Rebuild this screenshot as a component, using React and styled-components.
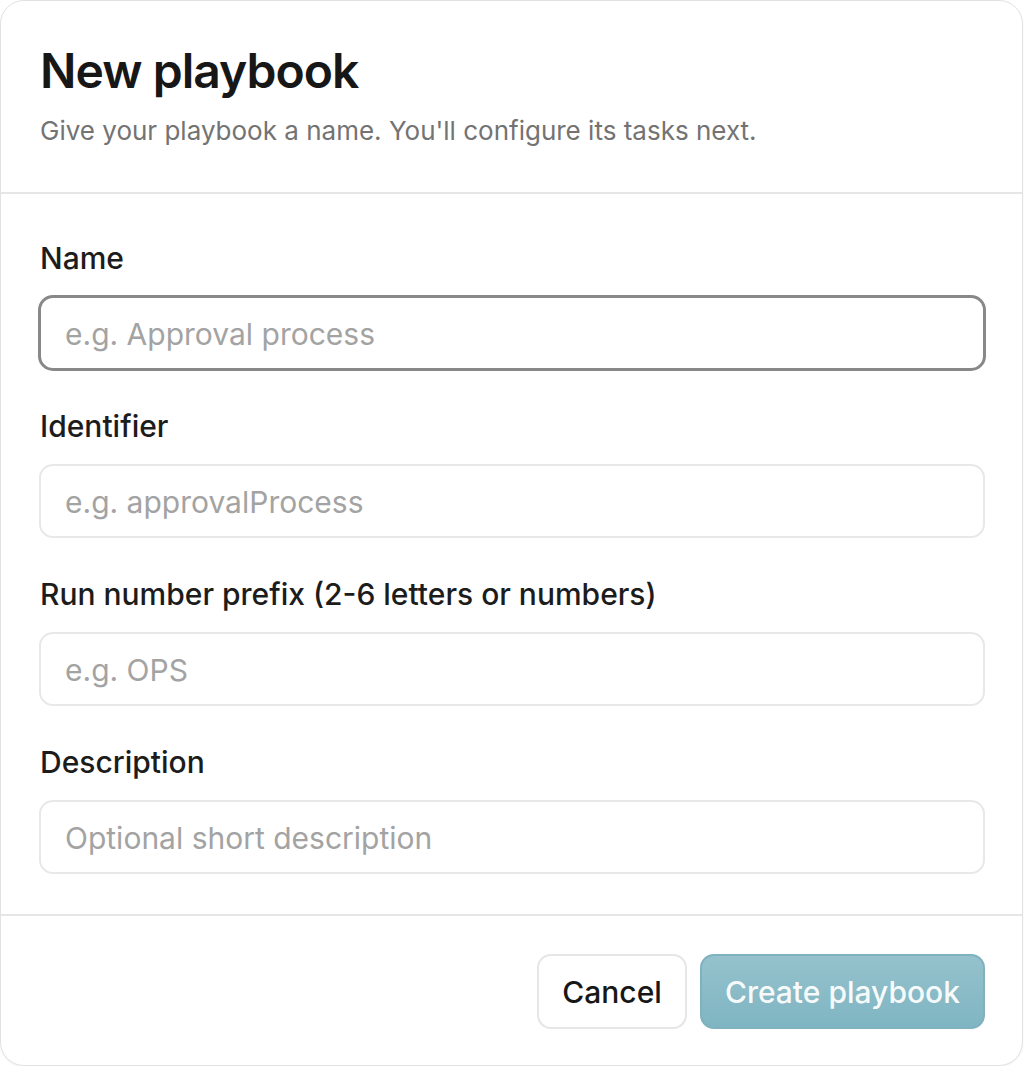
import React from "react";
import styled, { createGlobalStyle } from "styled-components";

const Global = createGlobalStyle`
  html, body {
    margin: 0;
    padding: 0;
    background: #ffffff;
  }
  body {
    font-family: Inter, "Noto Sans", "Liberation Sans", sans-serif;
    -webkit-font-smoothing: antialiased;
  }
  * { box-sizing: border-box; }
`;

const Dialog = styled.div`
  width: 1023px;
  height: 1066px;
  background: #ffffff;
  border: 1px solid #e2e2e2;
  border-radius: 24px;
  box-shadow: 0 1px 2px rgba(0, 0, 0, 0.06);
  display: flex;
  flex-direction: column;
  overflow: hidden;
`;

const Header = styled.header`
  padding: 38px 39px 0;
  height: 193px;
  flex-shrink: 0;
  border-bottom: 2px solid #e6e6e6;
  display: flex;
  flex-direction: column;
`;

const Title = styled.h1`
  margin: 0;
  font-size: 48px;
  line-height: 64px;
  font-weight: 600;
  letter-spacing: -0.02em;
  color: #171717;
`;

const Subtitle = styled.p`
  margin: 12px 0 0;
  font-size: 26px;
  line-height: 32px;
  color: #737373;
`;

const Body = styled.form`
  flex: 1;
  padding: 46px 37px 0 38px;
  display: flex;
  flex-direction: column;
  gap: 38px;
  border-bottom: 2px solid #e6e6e6;
`;

const Field = styled.label`
  display: flex;
  flex-direction: column;
  gap: 20px;
`;

const Label = styled.span`
  font-size: 30px;
  line-height: 36px;
  font-weight: 500;
  color: #1c1c1c;
  padding-left: 1px;
`;

const Input = styled.input`
  height: 74px;
  width: 100%;
  border: 2px solid ${(p) => (p.$focused ? "#888888" : "#e8e8e8")};
  box-shadow: ${(p) => (p.$focused ? "0 0 0 1px #888888" : "none")};
  border-radius: 14px;
  padding: 2px 24px 0;
  font-family: inherit;
  font-size: 30px;
  color: #1c1c1c;
  background: #ffffff;
  outline: none;

  &::placeholder {
    color: #a3a3a3;
  }
`;

const Footer = styled.footer`
  height: 149px;
  flex-shrink: 0;
  padding: 38px 37px 0 0;
  display: flex;
  justify-content: flex-end;
  align-items: flex-start;
  gap: 13px;
`;

const Button = styled.button`
  height: 75px;
  padding: 0 23px;
  border-radius: 14px;
  font-family: inherit;
  font-size: 30px;
  font-weight: 500;
  cursor: pointer;
  border: 2px solid ${(p) => (p.$primary ? "#7fb1be" : "#e6e6e6")};
  color: ${(p) => (p.$primary ? "rgba(255,255,255,0.94)" : "#171717")};
  background: ${(p) =>
    p.$primary ? "linear-gradient(180deg, #95c2cc 0%, #7fb5c2 100%)" : "#ffffff"};
`;

export default function App() {
  return (
    <>
      <Global />
      <Dialog>
        <Header>
          <Title>New playbook</Title>
          <Subtitle>Give your playbook a name. You'll configure its tasks next.</Subtitle>
        </Header>
        <Body onSubmit={(e) => e.preventDefault()}>
          <Field>
            <Label>Name</Label>
            <Input $focused placeholder="e.g. Approval process" />
          </Field>
          <Field>
            <Label>Identifier</Label>
            <Input placeholder="e.g. approvalProcess" />
          </Field>
          <Field>
            <Label>Run number prefix (2-6 letters or numbers)</Label>
            <Input placeholder="e.g. OPS" />
          </Field>
          <Field>
            <Label>Description</Label>
            <Input placeholder="Optional short description" />
          </Field>
        </Body>
        <Footer>
          <Button type="button">Cancel</Button>
          <Button type="button" $primary>
            Create playbook
          </Button>
        </Footer>
      </Dialog>
    </>
  );
}
